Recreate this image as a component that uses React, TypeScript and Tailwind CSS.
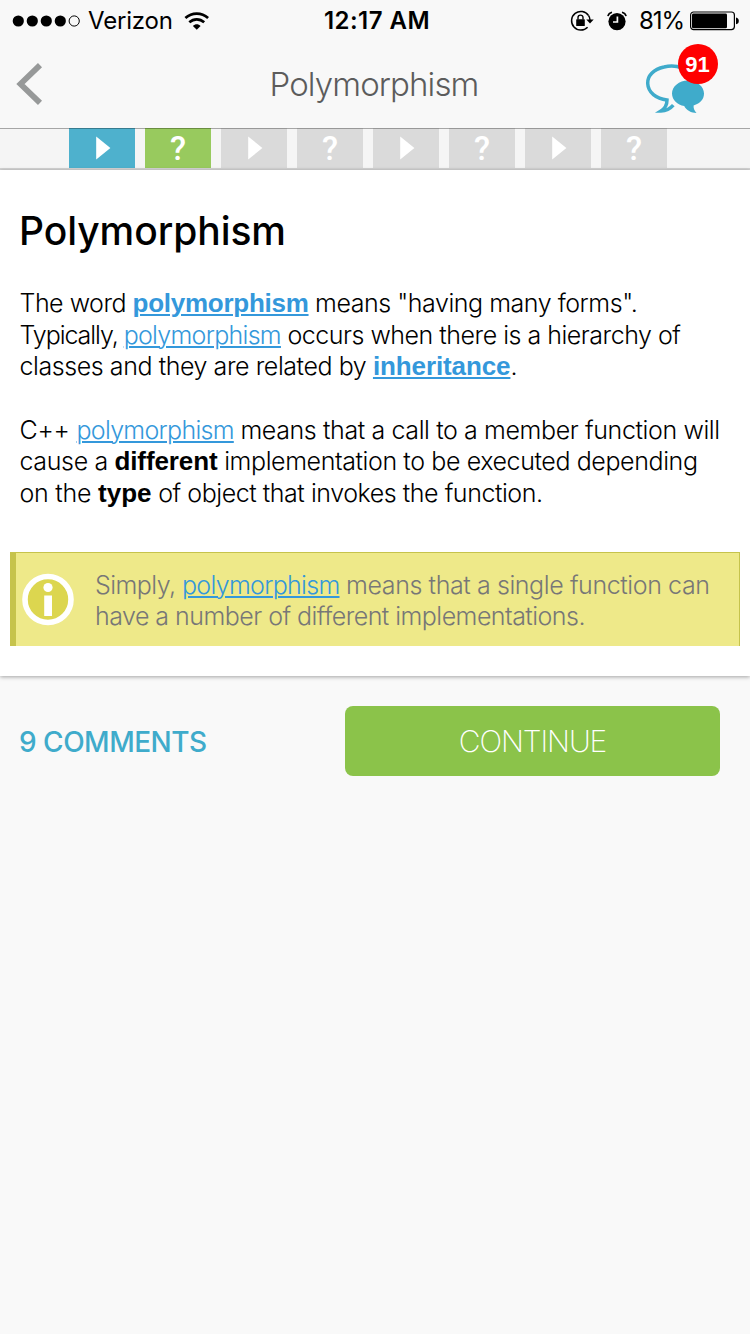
import type { ReactNode } from 'react';

function Bold({ children, className = '' }: { children: ReactNode; className?: string }) {
  return <b className={`font-['Liberation_Sans',sans-serif] text-[26px] font-bold ${className}`}>{children}</b>;
}

function Term({ children, className = '' }: { children: ReactNode; className?: string }) {
  return (
    <a className={`text-[#3498db] underline decoration-2 underline-offset-[2px] ${className}`}>{children}</a>
  );
}

function Line({ children, className = 'h-[31.7px]' }: { children: ReactNode; className?: string }) {
  return <div className={`whitespace-pre leading-[32px] ${className}`}>{children}</div>;
}

function SignalDots() {
  return (
    <svg width="68" height="14" viewBox="0 0 68 14" className="block">
      {[6.3, 20.3, 34.3, 48.3].map((x) => (
        <circle key={x} cx={x} cy="7" r="5.6" />
      ))}
      <circle cx="62.2" cy="7" r="5.1" fill="none" stroke="#000" strokeWidth="1" />
    </svg>
  );
}

function Wifi() {
  return (
    <svg width="26" height="18" viewBox="0 0 26 18" className="block" fill="none" stroke="#000" strokeWidth="2.7">
      <path d="M1.4 6.1C8 .1 17.5 .1 24.1 6.1" />
      <path d="M5.3 10.3C9.8 6.3 15.7 6.3 20.2 10.3" />
      <path d="M8.9 13.9C11.1 11.8 14.4 11.8 16.6 13.9L12.75 17.8Z" fill="#000" stroke="none" />
    </svg>
  );
}

function RotationLock() {
  return (
    <svg width="24" height="22" viewBox="0 0 24 22" className="block">
      <path d="M18.6 5.6A9.3 9.3 0 1 0 17.6 17.2" fill="none" stroke="#000" strokeWidth="1.5" />
      <path d="M18.6 5.6Q19.9 7.4 20 10" fill="none" stroke="#000" strokeWidth="1.5" />
      <path d="M16.3 9.6H23.7L20 13.6Z" />
      <rect x="6.2" y="9.2" width="8.6" height="6.9" rx=".6" />
      <path d="M8 9.5V7.6a2.5 2.5 0 0 1 5 0V9.5" fill="none" stroke="#000" strokeWidth="1.4" />
    </svg>
  );
}

function Alarm() {
  return (
    <svg width="20" height="20" viewBox="0 0 20 20" className="block">
      <circle cx="10" cy="10.6" r="8.6" />
      <path d="M.9 5.2Q1.6 2 5 1.2M19.1 5.2Q18.4 2 15 1.2" fill="none" stroke="#000" strokeWidth="1.6" />
      <path d="M10.4 5.4V11H6" fill="none" stroke="#f8f8f8" strokeWidth="1.7" />
    </svg>
  );
}

function Battery() {
  return (
    <svg width="50" height="20" viewBox="0 0 50 20" className="block">
      <rect x=".6" y="1" width="43.8" height="17.6" rx="3" fill="none" stroke="#000" strokeWidth="1.2" />
      <rect x="2" y="2.5" width="35" height="14.8" rx="1.4" />
      <path d="M46 6.6Q48.8 7.2 48.8 10T46 13.2Z" />
    </svg>
  );
}

function Chats() {
  return (
    <svg width="62" height="54" viewBox="0 0 62 54" className="block">
      <path
        d="M38 6C33 4 26 3.6 20 5C9.5 7.2 3.3 14 3.7 21.5C4.200 30.500 12 36.800 23 38C23 42.500 21 46.500 17 49C22 49 26 47 29.300 43.200"
        fill="none"
        stroke="#3fabcb"
        strokeWidth="3.5"
      />
      <path
        d="M44 18.500C53 18.500 60 24.500 60 31.500C60 37 56.500 41.500 49.600 43.400C49.300 46 50.500 48.800 52.500 51C47.500 51 42 48.200 40.200 44C33.500 43 28 38 28 31.500C28 24.500 35 18.500 44 18.500Z"
        fill="#3fabcb"
      />
    </svg>
  );
}

function StatusBar() {
  return (
    <div className="flex h-[41px] items-center">
      <div className="flex w-[324px] items-center pl-3">
        <SignalDots />
        <span className="ml-2 w-[96px] pt-px text-[24px] tracking-[-0.2px]">Verizon</span>
        <Wifi />
      </div>
      <span className="w-[246px] whitespace-pre pt-px text-[24px] font-semibold tracking-[0.45px]">12:17 AM</span>
      <RotationLock />
      <span className="ml-[13px]">
        <Alarm />
      </span>
      <span className="ml-[12px] w-[51px] pt-px text-[24px] tracking-[-1px]">81%</span>
      <Battery />
    </div>
  );
}

const steps = [
  { kind: 'video', color: 'bg-[#4eb1cd]' },
  { kind: 'quiz', color: 'bg-[#98ca5e]' },
  { kind: 'video', color: 'bg-[#dadada]' },
  { kind: 'quiz', color: 'bg-[#dadada]' },
  { kind: 'video', color: 'bg-[#dadada]' },
  { kind: 'quiz', color: 'bg-[#dadada]' },
  { kind: 'video', color: 'bg-[#dadada]' },
  { kind: 'quiz', color: 'bg-[#dadada]' },
];

export default function App() {
  return (
    <div className="flex h-[1334px] w-[750px] flex-col overflow-hidden bg-[#f9f9f9] font-['Inter',sans-serif] text-black">
      <header className="h-[128px] bg-[#f8f8f8]">
        <StatusBar />
        <div className="relative flex h-[87px] items-center justify-center">
          <svg width="28" height="44" viewBox="0 0 28 44" className="absolute left-4 top-[21px]">
            <path d="M24 3.2L4.5 22L24 40.8" fill="none" stroke="#979999" strokeWidth="5.8" />
          </svg>
          <h1 className="pb-[2px] pr-[2px] text-[33px] font-light leading-[40px] tracking-[-0.9px] text-[#5c5c5c]">Polymorphism</h1>
          <div className="absolute left-[644px] top-[21px]">
            <Chats />
            <span className="absolute left-[34px] top-[-18px] flex size-10 items-center justify-center rounded-full bg-[#f00] pr-px font-['Liberation_Sans',sans-serif] text-[22px] font-bold text-white">
              91
            </span>
          </div>
        </div>
      </header>

      <nav className="flex h-[42px] gap-[10px] border-b-2 border-[#d4d4d4] bg-[#f5f5f5] pl-[69px] shadow-[inset_0_1px_0_#a6a6a6]">
        {steps.map((s, i) => (
          <div
            key={i}
            className={`flex h-10 w-[66px] items-center justify-center shadow-[inset_0_1px_0_rgba(0,0,0,0.3)] ${s.color}`}
          >
            {s.kind === 'video' ? (
              <svg width="16" height="24" viewBox="0 0 16 24" className="ml-[2px]">
                <path d="M1.200 .5L15.400 12L1.200 23.500Z" fill="#fff" />
              </svg>
            ) : (
              <span className="pt-[2px] font-['Roboto',sans-serif] text-[33px] font-medium leading-[38px] text-white">?</span>
            )}
          </div>
        ))}
      </nav>

      <main className="h-[506px] shrink-0 bg-white pt-[37px] shadow-[0_1px_4px_rgba(0,0,0,0.35)]">
        <h2 className="pl-[19px] text-[39px] font-medium leading-[48px] tracking-[-0.06px]">Polymorphism</h2>
        <div className="mt-[32px] pl-[19.5px] text-[25px] font-light">
          <Line>
            <span className="tracking-[-0.5px]">The word </span>
            <Term><Bold className="tracking-[-0.26px]">polymorphism</Bold></Term>
            <span className="tracking-[-0.46px]"> means "having many forms".</span>
          </Line>
          <Line>
            <span className="tracking-[-1.05px]">Typically, </span>
            <Term className="tracking-[-0.72px]">polymorphism</Term>
            <span className="tracking-[-0.49px]"> occurs when there is a hierarchy of</span>
          </Line>
          <Line>
            <span className="tracking-[-0.43px]">classes and they are related by </span>
            <Term><Bold className="tracking-[-0.11px]">inheritance</Bold></Term>.
          </Line>
          <Line> </Line>
          <Line>
            <span className="tracking-[-0.22px]">C++ </span>
            <Term className="tracking-[-0.72px]">polymorphism</Term>
            <span className="tracking-[-0.39px]"> means that a call to a member function will</span>
          </Line>
          <Line>
            <span className="tracking-[-0.36px]">cause a </span>
            <Bold className="tracking-[-0.11px]">different</Bold>
            <span className="tracking-[-0.4px]"> implementation to be executed depending</span>
          </Line>
          <Line>
            <span className="tracking-[-0.24px]">on the </span>
            <Bold>type</Bold>
            <span className="tracking-[-0.45px]"> of object that invokes the function.</span>
          </Line>
        </div>

        <aside className="mx-[10px] mt-[43px] flex h-[94px] border-b-0 border-l-[6px] border-r border-t border-[#c6c34c] bg-[#eee989]">
          <svg width="54" height="54" viewBox="0 0 54 54" className="ml-[5px] mt-[20px] shrink-0">
            <circle cx="27" cy="26.5" r="23" fill="#dcd64f" stroke="#fff" strokeWidth="5.6" />
            <circle cx="27" cy="14.5" r="4.6" fill="#fff" />
            <rect x="23.2" y="22.5" width="7.8" height="20.5" fill="#fff" />
          </svg>
          <div className="ml-[20px] mt-4 text-[25px] font-light text-[#777]">
            <Line className="h-[31px]">
              <span className="tracking-[-0.54px]">Simply, </span>
              <Term className="tracking-[-0.7px]">polymorphism</Term>
              <span className="tracking-[-0.41px]"> means that a single function can</span>
            </Line>
            <Line className="h-[31px]">
              <span className="tracking-[-0.53px]">have a number of different implementations.</span>
            </Line>
          </div>
        </aside>
      </main>

      <footer className="mt-[30px] flex h-[70px] items-center justify-between pl-[19px] pr-[30px]">
        <a className="pt-px text-[28px] font-medium tracking-[-0.5px] text-[#3fabcb]">9 COMMENTS</a>
        <button className="h-[70px] w-[375px] rounded-[8px] bg-[#8bc34a] text-[30px] font-[250] tracking-[-1.1px] text-white">
          CONTINUE
        </button>
      </footer>
    </div>
  );
}
